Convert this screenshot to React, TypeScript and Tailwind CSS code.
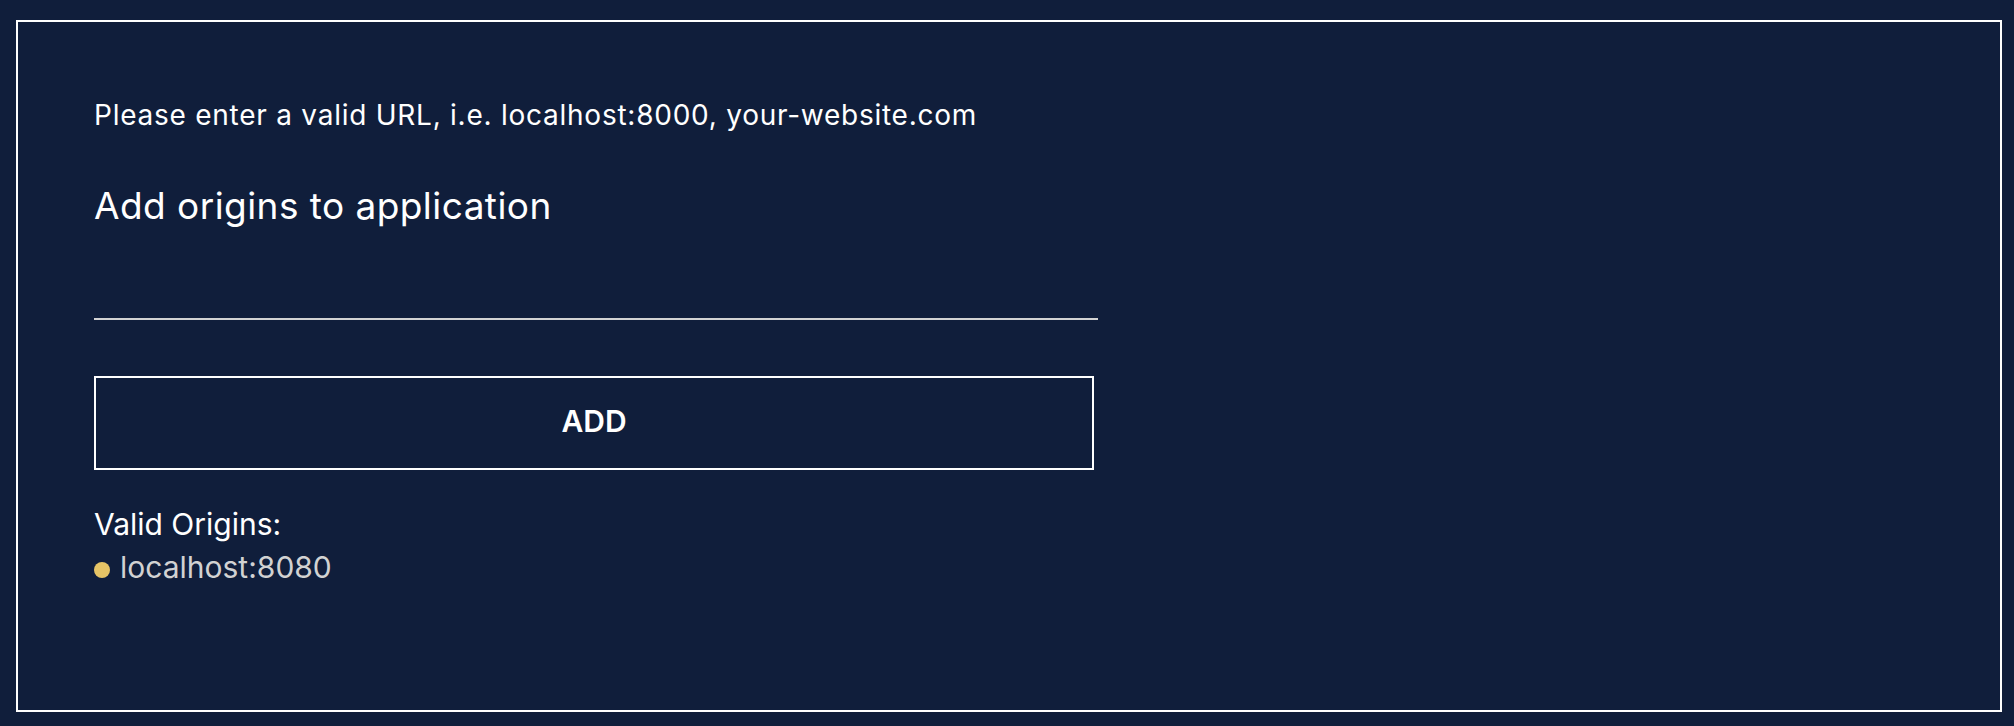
import { useState } from 'react'

export default function App() {
  const [value, setValue] = useState('')
  const [origins, setOrigins] = useState<string[]>(['localhost:8080'])

  const addOrigin = () => {
    const v = value.trim()
    if (!v) return
    setOrigins((o) => [...o, v])
    setValue('')
  }

  return (
    <div className="min-h-screen bg-[#101e3b] pb-[14px] pl-4 pr-3 pt-5 font-['Inter',sans-serif] text-white">
      <div className="h-[692px] border-2 border-white pl-[76px] pt-[77px]">
        <p className="text-[28px] leading-[32px] tracking-[0.75px] text-white">
          Please enter a valid URL, i.e. localhost:8000, your-website.com
        </p>
        <h2 className="mt-[55px] text-[37px] leading-[40px] font-normal tracking-[0.45px] text-white">
          Add origins to application
        </h2>

        <input
          type="text"
          value={value}
          onChange={(e) => setValue(e.target.value)}
          className="mt-[36px] block h-[58px] w-[1004px] border-b-2 border-[#d3d3d3] bg-transparent font-['Inter',sans-serif] text-[28px] text-white outline-none"
        />

        <button
          type="button"
          onClick={addOrigin}
          className="mt-[56px] block h-[94px] w-[1000px] border-2 border-white bg-transparent pb-[4px] font-['Inter',sans-serif] text-[30px] font-semibold text-white"
        >
          ADD
        </button>

        <div className="mt-[33px] text-[30px] leading-[43px]">
          <p className="text-white">Valid Origins:</p>
          <ul>
            {origins.map((o) => (
              <li key={o} className="text-[#d2d2d2]">
                <span className="mr-[10px] inline-block h-4 w-4 rounded-full bg-[#e6c466] align-baseline" />
                {o}
              </li>
            ))}
          </ul>
        </div>
      </div>
    </div>
  )
}
